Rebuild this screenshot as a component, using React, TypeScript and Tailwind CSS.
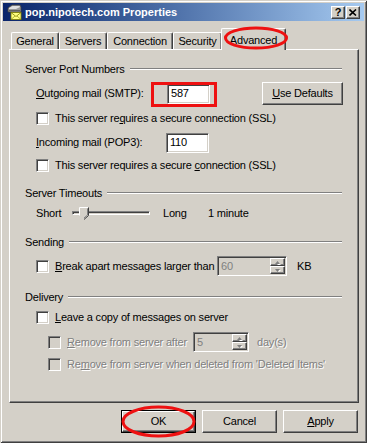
import React from 'react'

const raised =
  'border border-t-white border-l-white border-r-[#404040] border-b-[#404040] shadow-[inset_-1px_-1px_#808080] bg-[#d4d0c8]'
const sunken =
  'border border-t-[#808080] border-l-[#808080] border-r-white border-b-white shadow-[inset_1px_1px_#404040,inset_-1px_-1px_#d4d0c8]'
const dim = 'text-[#808080] [text-shadow:1px_1px_0_#ffffff]'

function Check({ disabled }: { disabled?: boolean }) {
  return (
    <span
      className={`w-[13px] h-[13px] shrink-0 ${sunken} ${disabled ? 'bg-[#d4d0c8]' : 'bg-white'}`}
    />
  )
}

function Group({ title, className }: { title: string; className: string }) {
  return (
    <div className={`flex items-center h-[14px] pl-[15px] pr-[16px] ${className}`}>
      <span>{title}</span>
      <span className="ml-[5px] flex-1 h-[2px] border-t border-t-[#808080] border-b border-b-white" />
    </div>
  )
}

function Arrow({ up }: { up?: boolean }) {
  return (
    <svg width="5" height="3" viewBox="0 0 5 3" className="overflow-visible">
      <polygon
        points={up ? '3,1 5,3 1,3' : '1,0 5,0 3,2'}
        transform="translate(1,1)"
        fill="#ffffff"
      />
      <polygon points={up ? '2.5,0 5,3 0,3' : '0,0 5,0 2.5,3'} fill="#808080" />
    </svg>
  )
}

function Spin({ value, w }: { value: string; w: string }) {
  return (
    <div className={`${w} h-[20px] ${sunken} bg-[#d4d0c8] flex items-stretch p-[1px]`}>
      <span className="flex-1 pl-[2px] text-[#808080] leading-[16px]">{value}</span>
      <div className="w-[15px] flex flex-col">
        <span className={`h-[8px] ${raised} flex items-center justify-center`}>
          <Arrow up />
        </span>
        <span className={`h-[8px] ${raised} flex items-center justify-center`}>
          <Arrow />
        </span>
      </div>
    </div>
  )
}

function Btn({ children, def, w = 'w-[75px]' }: { children: React.ReactNode; def?: boolean; w?: string }) {
  if (def) {
    return (
      <div className={`${w} h-[23px] border border-black`}>
        <div className={`w-full h-full ${raised} flex items-center justify-center`}>{children}</div>
      </div>
    )
  }
  return <div className={`${w} h-[23px] ${raised} flex items-center justify-center`}>{children}</div>
}

function TitleIcon() {
  return (
    <svg width="16" height="16" viewBox="0 0 16 16">
      <path d="M2 4 L6 1 H14 L15 3 V8 H2 Z" fill="#9a9a9a" stroke="#404040" strokeWidth="0.8" />
      <path d="M3 4 L6.5 2 H13.5 L14 3 L10 5 H3 Z" fill="#e0e0e0" />
      <rect x="3" y="6" width="11" height="1" fill="#606060" />
      <rect x="5" y="8.5" width="10" height="7" fill="#ffff80" stroke="#808000" strokeWidth="0.8" />
      <path d="M5 8.5 L10 12.5 L15 8.5" fill="none" stroke="#808000" strokeWidth="0.8" />
      <path d="M5 15.5 L9 12 M15 15.5 L11 12" fill="none" stroke="#808000" strokeWidth="0.6" />
    </svg>
  )
}

export default function App() {
  const tabs = [
    { name: 'General', w: 'w-[48px]' },
    { name: 'Servers', w: 'w-[48px]' },
    { name: 'Connection', w: 'w-[66px]' },
    { name: 'Security', w: 'w-[49px]' },
  ]

  return (
    <div className="relative w-[367px] h-[443px] overflow-hidden bg-[#d4d0c8] text-black text-[11px] tracking-[-0.2px] font-['Tahoma','Liberation_Sans',sans-serif] shadow-[inset_1px_1px_#d4d0c8,inset_-1px_-1px_#404040,inset_2px_2px_#ffffff,inset_-2px_-2px_#808080]">
      {/* Title bar */}
      <div className="mt-[3px] mx-[3px] h-[18px] bg-linear-to-r from-[#0a246a] to-[#a6caf0] flex items-center pl-[3px] pr-[4px]">
        <TitleIcon />
        <span className="ml-[3px] text-white font-bold text-[11px] tracking-[0px]">pop.nipotech.com Properties</span>
        <div className="ml-auto flex gap-[1px]">
          <span className={`w-[14px] h-[13px] ${raised} flex items-center justify-center font-bold text-[11px] leading-none`}>?</span>
          <span className={`w-[14px] h-[13px] ${raised} flex items-center justify-center`}>
            <svg width="8" height="7" viewBox="0 0 8 7">
              <path d="M0.5 0.5 L7 6.5 M7 0.5 L0.5 6.5" stroke="#000" strokeWidth="1.6" />
            </svg>
          </span>
        </div>
      </div>

      {/* Tabs */}
      <div className="mt-[7px] ml-[11px] h-[21px] flex items-end">
        {tabs.map((t) => (
          <div
            key={t.name}
            className={`${t.w} h-[17px] border-t border-l border-t-white border-l-white border-r border-r-[#404040] shadow-[inset_-1px_0_#808080] rounded-tl-[2px] rounded-tr-[2px] flex items-center justify-center`}
          >
            {t.name}
          </div>
        ))}
        <div className="relative z-10 -ml-[1px] w-[65px] h-[22px] -mb-[1px] bg-[#d4d0c8] border-t border-l border-t-white border-l-white border-r border-r-[#404040] shadow-[inset_-1px_0_#808080] rounded-tl-[2px] rounded-tr-[2px] flex justify-center pt-[3px]">
          Advanced
        </div>
      </div>

      {/* Panel */}
      <div className={`ml-[9px] w-[350px] h-[354px] border border-t-white border-l-white border-r-[#404040] border-b-[#404040] shadow-[inset_-1px_-1px_#808080] flex flex-col`}>
        <Group title="Server Port Numbers" className="mt-[12px]" />

        <div className="mt-[6px] h-[23px] flex items-center pl-[26px]">
          <span className="w-[131px]">
            <span className="underline">O</span>utgoing mail (SMTP):
          </span>
          <div className={`w-[43px] h-[20px] ${sunken} bg-white pl-[3px] leading-[17px]`}>587</div>
          <div className="ml-[52px]">
            <Btn w="w-[81px]">
              <span>
                <span className="underline">U</span>se Defaults
              </span>
            </Btn>
          </div>
        </div>

        <div className="mt-[7px] h-[13px] flex items-center pl-[26px] gap-[6px]">
          <Check />
          <span>
            This server re<span className="underline">q</span>uires a secure connection (SSL)
          </span>
        </div>

        <div className="mt-[7px] h-[21px] flex items-center pl-[26px]">
          <span className="w-[130px]">
            <span className="underline">I</span>ncoming mail (POP3):
          </span>
          <div className={`w-[43px] h-[20px] ${sunken} bg-white pl-[3px] leading-[17px]`}>110</div>
        </div>

        <div className="mt-[6px] h-[13px] flex items-center pl-[26px] gap-[6px]">
          <Check />
          <span>
            This server requires a secure <span className="underline">c</span>onnection (SSL)
          </span>
        </div>

        <Group title="Server Timeouts" className="mt-[14px]" />

        <div className="mt-[4px] h-[18px] flex items-center pl-[26px]">
          <span className="w-[36px]">Short</span>
          <div className="relative w-[78px] h-[18px] flex items-center">
            <div className={`w-full h-[4px] ${sunken} bg-[#d4d0c8]`} />
            <svg className="absolute left-[7px] top-[3px]" width="10" height="13" viewBox="0 0 10 13">
              <path d="M0.5 0.5 H9.5 V8.5 L5 12.5 L0.5 8.5 Z" fill="#d4d0c8" />
              <path d="M0.5 8.5 V0.5 H9" fill="none" stroke="#ffffff" />
              <path d="M9.5 0.5 V8.5 L5 12.5" fill="none" stroke="#404040" />
              <path d="M8.5 1.5 V8 L5 11" fill="none" stroke="#808080" />
            </svg>
          </div>
          <span className="ml-[13px] w-[45px]">Long</span>
          <span>1 minute</span>
        </div>

        <Group title="Sending" className="mt-[13px]" />

        <div className="mt-[7px] h-[20px] flex items-center pl-[26px]">
          <Check />
          <span className="ml-[6px] w-[162px]">
            <span className="underline">B</span>reak apart messages larger than
          </span>
          <Spin value="60" w="w-[70px]" />
          <span className="ml-[10px]">KB</span>
        </div>

        <Group title="Delivery" className="mt-[14px]" />

        <div className="mt-[7px] h-[13px] flex items-center pl-[26px] gap-[6px]">
          <Check />
          <span>
            <span className="underline">L</span>eave a copy of messages on server
          </span>
        </div>

        <div className="mt-[8px] h-[20px] flex items-center pl-[38px]">
          <Check disabled />
          <span className={`ml-[6px] w-[126px] ${dim}`}>
            <span className="underline">R</span>emove from server after
          </span>
          <Spin value="5" w="w-[56px]" />
          <span className={`ml-[8px] ${dim}`}>day(s)</span>
        </div>

        <div className="mt-[6px] h-[13px] flex items-center pl-[38px] gap-[6px]">
          <Check disabled />
          <span className={dim}>
            Re<span className="underline">m</span>ove from server when deleted from 'Deleted Items'
          </span>
        </div>
      </div>

      {/* Bottom buttons */}
      <div className="mt-[7px] ml-[121px] flex gap-[6px]">
        <Btn def>OK</Btn>
        <Btn>Cancel</Btn>
        <Btn>
          <span>
            <span className="underline">A</span>pply
          </span>
        </Btn>
      </div>

      {/* Red annotations */}
      <svg className="absolute inset-0 z-20 pointer-events-none" width="367" height="443" viewBox="0 0 367 443">
        <ellipse cx="256" cy="38" rx="30.5" ry="10" fill="none" stroke="#ee1111" strokeWidth="3" />
        <rect x="152.5" y="83.5" width="63" height="22" fill="none" stroke="#ee1111" strokeWidth="3" />
        <ellipse cx="158.5" cy="421.5" rx="35.5" ry="14.5" fill="none" stroke="#ee1111" strokeWidth="3" />
      </svg>
    </div>
  )
}
